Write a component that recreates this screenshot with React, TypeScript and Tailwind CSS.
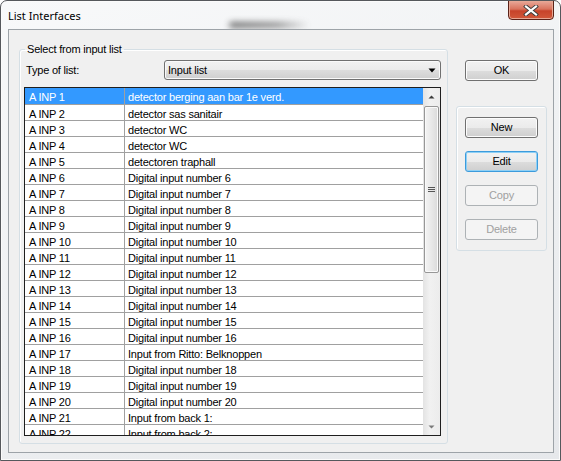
import React from "react";

const rows: [string, string][] = [
  ["A INP 1", "detector berging aan bar 1e verd."],
  ["A INP 2", "detector sas sanitair"],
  ["A INP 3", "detector WC"],
  ["A INP 4", "detector WC"],
  ["A INP 5", "detectoren traphall"],
  ["A INP 6", "Digital input number 6"],
  ["A INP 7", "Digital input number 7"],
  ["A INP 8", "Digital input number 8"],
  ["A INP 9", "Digital input number 9"],
  ["A INP 10", "Digital input number 10"],
  ["A INP 11", "Digital input number 11"],
  ["A INP 12", "Digital input number 12"],
  ["A INP 13", "Digital input number 13"],
  ["A INP 14", "Digital input number 14"],
  ["A INP 15", "Digital input number 15"],
  ["A INP 16", "Digital input number 16"],
  ["A INP 17", "Input from Ritto: Belknoppen"],
  ["A INP 18", "Digital input number 18"],
  ["A INP 19", "Digital input number 19"],
  ["A INP 20", "Digital input number 20"],
  ["A INP 21", "Input from back 1:"],
  ["A INP 22", "Input from back 2:"],
];

function Btn({ label, variant = "normal" }: { label: string; variant?: "normal" | "focus" | "disabled" }) {
  if (variant === "disabled") {
    return (
      <div className="w-[73px] h-[21px] rounded-[3px] border border-[#adb2b5] bg-[#f4f4f4] flex items-center justify-center text-[#a0a0a0]">
        {label}
      </div>
    );
  }
  if (variant === "focus") {
    return (
      <div className="w-[73px] h-[21px] rounded-[3px] border border-[#3c9bdc] shadow-[inset_0_0_0_1px_#8fd0f5] bg-[linear-gradient(to_bottom,#f2f2f2_0%,#ebebeb_50%,#dddddd_51%,#cfcfcf_100%)] flex items-center justify-center text-black">
        {label}
      </div>
    );
  }
  return (
    <div className="w-[73px] h-[21px] rounded-[3px] border border-[#707070] shadow-[inset_0_0_0_1px_#fcfcfc] bg-[linear-gradient(to_bottom,#f2f2f2_0%,#ebebeb_50%,#dddddd_51%,#cfcfcf_100%)] flex items-center justify-center text-black">
      {label}
    </div>
  );
}

export default function App() {
  return (
    <div className="w-[561px] h-[461px] bg-white font-['Liberation_Sans',Arial,sans-serif] text-[11px] tracking-[-0.2px] text-black">
      <div className="relative w-[561px] h-[461px] flex flex-col rounded-t-[7px] border border-[#55585c] shadow-[inset_0_0_0_1px_#fbfbfb] bg-[linear-gradient(160deg,#f8f9fa_0%,#eef0f2_55%,#e6e8eb_100%)] px-[7px] pr-[6px] pb-[7px] overflow-hidden">
        <div className="absolute left-[228px] top-[21px] w-[80px] h-[6px] rounded-full bg-[linear-gradient(to_right,#333,#666_60%,transparent)] opacity-70 blur-[3px]" />
        {/* title bar */}
        <div className="relative h-[28px] flex items-start justify-between">
          <div className="mt-[7px] font-['Noto_Sans',sans-serif] text-[11px] tracking-normal leading-[15px] text-black">
            List Interfaces
          </div>
          <div className="-mt-[1px] w-[46px] h-[20px] rounded-b-[4px] border border-[#5a2218] shadow-[inset_0_0_0_1px_#e7a794] bg-[linear-gradient(to_bottom,#e9a899_0%,#d9735d_45%,#c7432a_55%,#d2583a_100%)] flex items-center justify-center">
            <svg width="16" height="11" viewBox="0 0 16 11">
              <path d="M3 1.5 L13 9.5 M13 1.5 L3 9.5" stroke="#3c3c3c" strokeWidth="4" strokeLinecap="square" />
              <path d="M3 1.5 L13 9.5 M13 1.5 L3 9.5" stroke="#ffffff" strokeWidth="2.2" strokeLinecap="square" />
            </svg>
          </div>
        </div>
        {/* client area */}
        <div className="relative flex-1 border border-[#9da3a8] bg-[#f0f0f0] flex items-start">
          <fieldset className="ml-[10px] mt-[13px] w-[429px] border border-[#d5dfe5] rounded-[3px] shadow-[inset_1px_1px_0_#ffffff] pl-[4px] pr-[6px] pb-[7px] pt-[4px] m-0">
            <legend className="ml-[1px] px-[2px] leading-[13px]">Select from input list</legend>
            <div className="flex items-center justify-between">
              <span className="ml-[2px]">Type of list:</span>
              <div className="w-[277px] h-[20px] rounded-[3px] border border-[#707070] shadow-[inset_0_0_0_1px_#fafafa] bg-[linear-gradient(to_bottom,#f2f2f2_0%,#ebebeb_50%,#dddddd_51%,#cfcfcf_100%)] flex items-center justify-between pl-[3px] pr-[4px]">
                <span>Input list</span>
                <svg width="8" height="5" viewBox="0 0 8 5">
                  <path d="M0.5 0.5 L7.5 0.5 L4 4.5 Z" fill="#000" />
                </svg>
              </div>
            </div>
            <div className="mt-[7px] w-[417px] h-[349px] border border-[#1e1e1e] bg-white flex overflow-hidden">
              <div className="flex-1 flex flex-col overflow-hidden">
                {rows.map(([a, b], i) => {
                  const sel = i === 0;
                  return (
                    <div
                      key={a}
                      className={
                        "flex shrink-0 border-b border-[#a0a0a0] " +
                        (i === 0 ? "h-[17px] " : "h-[16px] ") +
                        (sel ? "bg-[#3399ff] text-white" : "text-black")
                      }
                    >
                      <div className="w-[100px] shrink-0 border-r border-[#a0a0a0] pl-[4px] pt-[3px] leading-[12px] whitespace-nowrap">
                        {a}
                      </div>
                      <div className="flex-1 pl-[3px] pt-[3px] leading-[12px] whitespace-nowrap">{b}</div>
                    </div>
                  );
                })}
              </div>
              {/* scrollbar */}
              <div className="w-[17px] shrink-0 bg-[linear-gradient(to_right,#e3e3e3,#f1f1f1_40%,#ececec)] flex flex-col">
                <div className="h-[17px] flex items-center justify-center">
                  <svg width="7" height="4" viewBox="0 0 7 4">
                    <path d="M0.5 3.5 L6.5 3.5 L3.5 0.5 Z" fill="#3d3d3d" />
                  </svg>
                </div>
                <div className="mx-[1px] mt-[1px] h-[167px] rounded-[2px] border border-[#979797] shadow-[inset_0_0_0_1px_#fafafa] bg-[linear-gradient(to_right,#f4f4f4,#e8e8e8_50%,#dadada)] flex items-center justify-center">
                  <svg width="7" height="6" viewBox="0 0 7 6">
                    <path d="M0 0.5 H7 M0 2.5 H7 M0 4.5 H7" stroke="#555" strokeWidth="1" />
                  </svg>
                </div>
                <div className="flex-1" />
                <div className="h-[17px] flex items-center justify-center">
                  <svg width="7" height="4" viewBox="0 0 7 4">
                    <path d="M0.5 0.5 L6.5 0.5 L3.5 3.5 Z" fill="#7a7a7a" />
                  </svg>
                </div>
              </div>
            </div>
          </fieldset>
          <div className="ml-[8px] mt-[30px] flex flex-col">
            <div className="ml-[9px]">
              <Btn label="OK" />
            </div>
            <div className="mt-[25px] w-[91px] h-[145px] rounded-[3px] border border-[#d5dfe5] shadow-[inset_1px_1px_0_#ffffff] pl-[8px] pt-[10px] flex flex-col gap-[13px]">
              <Btn label="New" />
              <Btn label="Edit" variant="focus" />
              <Btn label="Copy" variant="disabled" />
              <Btn label="Delete" variant="disabled" />
            </div>
          </div>
        </div>
      </div>
    </div>
  );
}
